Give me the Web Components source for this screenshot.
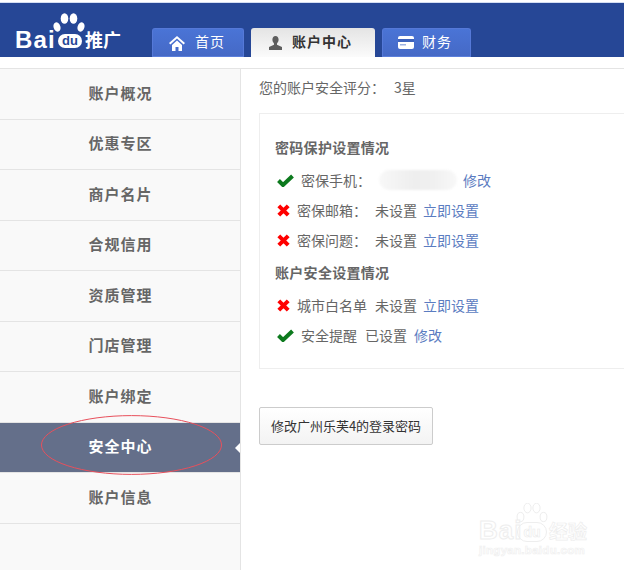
<!DOCTYPE html>
<html lang="zh"><head><meta charset="utf-8">
<style>
html,body{margin:0;padding:0;background:#fff;overflow:hidden}
body{width:624px;height:570px;font-family:"Noto Sans CJK SC","Liberation Sans",sans-serif;color:#666}
</style></head><body>
<bd-app></bd-app>
<script>
const FONT='"Noto Sans CJK SC","Liberation Sans",sans-serif';
const paw=(c)=>`<svg width="32" height="22" viewBox="0 0 32 22" style="display:block"><g fill="${c}"><ellipse cx="4" cy="14" rx="3.4" ry="4.8" transform="rotate(-18 4 14)"/><ellipse cx="11.500" cy="5.500" rx="3.800" ry="5.300"/><ellipse cx="20.500" cy="5.500" rx="3.800" ry="5.300"/><ellipse cx="28" cy="14" rx="3.400" ry="4.800" transform="rotate(18 28 14)"/></g></svg>`;
function def(name,html){customElements.define(name,class extends HTMLElement{connectedCallback(){if(this.shadowRoot)return;const s=this.attachShadow({mode:'open'});s.innerHTML=typeof html==='function'?html(this):html;}});}

def('bd-logo',`<style>
:host{display:block;position:relative;width:108px;height:36px;color:#fff;font-family:"Liberation Sans",sans-serif}
.row{position:absolute;left:0;bottom:0;display:flex;align-items:flex-end}
.bai{font:bold 24px/21px "Liberation Sans",sans-serif;letter-spacing:1.200px;width:43px}
.du{width:24px;height:14px;border-radius:7px;background:#fff;color:#264796;font:bold 13px/13px "Liberation Sans",sans-serif;text-align:center;margin-bottom:2px}
.cn{font:bold 18px/21px ${FONT};margin-left:3px;width:38px;white-space:nowrap}
.paw{position:absolute;left:38px;top:-1px}
</style><div class="paw">${paw('#fff')}</div>
<div class="row"><span class="bai">Bai</span><span class="du">du</span><span class="cn">推广</span></div>`);

def('bd-tab',h=>`<style>
:host{display:flex;align-items:center;box-sizing:border-box;height:29px;width:${h.getAttribute('w')}px;padding-left:${h.getAttribute('pl')}px;padding-bottom:4px;gap:${h.getAttribute('gap')}px;border-radius:3px 3px 0 0;
 background:linear-gradient(#4a74d6,#4569c6);border:1px solid #5579d8;border-bottom-color:#5b7fdb;color:#fff;font:14px/20px ${FONT};letter-spacing:1px}
:host([active]){background:linear-gradient(#e4e4e4,#fbfbfb);border:0;color:#333;font-weight:bold}
svg{display:block;flex:none}
::slotted(svg){margin-top:4px}
</style><slot name="icon"></slot><slot></slot>`);

def('bd-header',`<style>
:host{display:block;border-top:2px solid #fff;box-shadow:inset 0 1px 0 #d4def2;height:54px;padding-top:1px;background:#264796;position:relative}
.in{display:flex;align-items:flex-end;height:54px;padding-left:15px}
bd-logo{margin-bottom:7px;margin-right:29px}
.tabs{display:flex;gap:7px}
</style><div class="in"><bd-logo></bd-logo><div class="tabs"><slot></slot></div></div>`);

def('bd-side-item',`<style>
:host{display:flex;align-items:center;justify-content:center;box-sizing:border-box;height:50.5px;padding:0 0 2px 1px;border-bottom:1px solid #e4e4e4;font:bold 15px/20px ${FONT};letter-spacing:1px;color:#666;position:relative;width:240px}
:host([active]){background:#646f8a;color:#fff;border-bottom-color:#e4e4e4}
:host([active])::after{content:"";position:absolute;right:0;top:20px;border:5px solid transparent;border-right-color:#fff;border-left:0}
</style><slot></slot>`);

def('bd-sidebar',`<style>
:host{display:block;width:240px;background:#f9f9f9;border-right:1px solid #e4e4e4;position:relative;height:501px}
svg{position:absolute;left:40px;top:346px;pointer-events:none}
</style><slot></slot>
<svg width="183" height="61" viewBox="0 0 183 61"><ellipse cx="91.5" cy="30" rx="90" ry="29.4" fill="none" stroke="#e8505c" stroke-width="1"/></svg>`);

def('bd-status',h=>{const ok=h.hasAttribute('ok');return `<style>
:host{display:flex;align-items:center;height:20px;gap:8px;font:14px/20px ${FONT};color:#666;white-space:nowrap}
.ic{flex:none;display:block;margin:0 -1px 0 2px}
</style>${ok?`<svg class="ic" width="17" height="13" viewBox="0 0 17 13"><path d="M1.500 6.500 6 11 15.500 2" fill="none" stroke="#0d7a1e" stroke-width="4"/></svg>`:`<svg class="ic" width="13" height="13" viewBox="0 0 13 13"><path d="M1.800 1.800 11.200 11.200M11.200 1.800 1.800 11.200" fill="none" stroke="#f00" stroke-width="4"/></svg>`}<slot></slot>`});

def('bd-link',`<style>:host{display:inline;color:#5b7cc1;font:14px/20px ${FONT}}</style><slot></slot>`);

def('bd-panel',`<style>
:host{display:block;box-sizing:border-box;width:400px;height:256px;border:1px solid #eee;padding:23px 0 0 15px}
</style><slot></slot>`);

def('bd-heading',`<style>:host{display:block;font:bold 14px/20px ${FONT};letter-spacing:.3px;color:#666}</style><slot></slot>`);

def('bd-button',`<style>
:host{display:flex;align-items:center;justify-content:center;box-sizing:border-box;width:174px;height:38px;border:1px solid #ccc;border-radius:2px;background:linear-gradient(#fff,#f3f3f3);color:#333;font:13px/20px ${FONT};white-space:nowrap}
</style><slot></slot>`);

def('bd-watermark',`<style>
:host{position:absolute;left:479px;top:503px;width:112px;height:54px;color:#fff;pointer-events:none;-webkit-text-stroke:1px #eeeeee}
.bai{position:absolute;left:0;top:13px;font:bold 26px/28px "Liberation Sans",sans-serif;letter-spacing:1px}
.du{position:absolute;left:38px;top:19px;width:30px;height:20px;border-radius:10px;border:1px solid #eee;box-sizing:border-box;font:bold 14px/18px "Liberation Sans",sans-serif;text-align:center;-webkit-text-stroke:.6px #ebebeb}
.cn{position:absolute;left:70px;top:17px;font:bold 19px/22px ${FONT};-webkit-text-stroke:.7px #ededed}
.url{position:absolute;left:0;top:40px;font:bold 11.5px/14px "Liberation Sans",sans-serif;letter-spacing:.3px;-webkit-text-stroke:.7px #f0f0f0}
.paw{position:absolute;left:36px;top:0}
</style><div class="paw"><svg width="34" height="22" viewBox="0 0 32 22"><g fill="#fff" stroke="#eee"><ellipse cx="4.500" cy="14" rx="3.400" ry="4.600"/><ellipse cx="11.500" cy="5" rx="3.600" ry="4.800"/><ellipse cx="20.500" cy="5" rx="3.600" ry="4.800"/><ellipse cx="27.500" cy="14" rx="3.400" ry="4.600"/></g></svg></div>
<span class="bai">Bai</span><span class="du">du</span><span class="cn">经验</span><span class="url">jingyan.baidu.com</span>`);

def('bd-app',`<style>
:host{display:block;position:relative;width:624px;height:570px;overflow:hidden}
.main{display:flex;margin-top:11px;border-top:1px solid #e4e4e4}
.content{flex:1;padding-left:18px;min-width:0;overflow:hidden}
.score{display:flex;gap:9px;font:14px/20px ${FONT};color:#666;margin-top:8px;margin-bottom:16px;white-space:nowrap}
.blob{display:block;width:78px;height:20px;border-radius:10px;background:linear-gradient(90deg,#f8f8f8,#eeeeee 45%,#f0f0f0 70%,#f8f8f8);filter:blur(.8px);margin-right:-2px}
bd-status.first{margin-top:13px}
bd-status.n{margin-top:10px}
bd-heading.h2{margin-top:12px}
bd-button{margin-top:38px}
bd-link.a{margin-left:-2px}
bd-link.b{margin-left:-1px}
svg{display:block}
</style>
<bd-header>
 <bd-tab w="92" pl="16" gap="10"><svg slot="icon" width="16" height="16" viewBox="0 0 16 16"><path d="M8 1 0 8l1.400 1.400L8 3.600l6.600 5.800L16 8z" fill="#fff"/><path d="M3 10 8 5.600 13 10v6H9.500v-4h-3v4H3z" fill="#fff"/></svg>首页</bd-tab>
 <bd-tab active w="124" pl="17" gap="9"><svg slot="icon" width="15" height="16" viewBox="0 0 15 16"><path d="M7.500 1C5.600 1 4.400 2.500 4.400 4.600c0 1.600.7 3 1.600 3.800v1.300L1 12v3h13v-3L9 9.700V8.400c.9-.8 1.600-2.200 1.600-3.800C10.600 2.500 9.400 1 7.500 1z" fill="#5e5e5e"/></svg>账户中心</bd-tab>
 <bd-tab w="89" pl="15" gap="8"><svg slot="icon" width="16" height="13" viewBox="0 0 16 13"><rect width="16" height="13" rx="2" fill="#fff"/><rect y="3" width="16" height="3" fill="#3e63bd"/><rect x="2" y="8" width="6" height="1.500" fill="#9db2e2"/></svg>财务</bd-tab>
</bd-header>
<div class="main">
 <bd-sidebar>
  <bd-side-item>账户概况</bd-side-item><bd-side-item>优惠专区</bd-side-item><bd-side-item>商户名片</bd-side-item><bd-side-item>合规信用</bd-side-item><bd-side-item>资质管理</bd-side-item><bd-side-item>门店管理</bd-side-item><bd-side-item>账户绑定</bd-side-item><bd-side-item active>安全中心</bd-side-item><bd-side-item>账户信息</bd-side-item>
 </bd-sidebar>
 <div class="content">
  <div class="score"><span>您的账户安全评分：</span><span>3星</span></div>
  <bd-panel>
   <bd-heading>密码保护设置情况</bd-heading>
   <bd-status ok class="first"><span>密保手机：</span><span class="blob"></span><bd-link>修改</bd-link></bd-status>
   <bd-status class="n"><span>密保邮箱：</span><span>未设置</span><bd-link class="a">立即设置</bd-link></bd-status>
   <bd-status class="n"><span>密保问题：</span><span>未设置</span><bd-link class="a">立即设置</bd-link></bd-status>
   <bd-heading class="h2">账户安全设置情况</bd-heading>
   <bd-status class="first"><span>城市白名单</span><span>未设置</span><bd-link class="a">立即设置</bd-link></bd-status>
   <bd-status ok class="n"><span>安全提醒</span><span>已设置</span><bd-link class="b">修改</bd-link></bd-status>
  </bd-panel>
  <bd-button>修改广州乐芙4的登录密码</bd-button>
 </div>
</div>
<bd-watermark></bd-watermark>`);
</script>
</body></html>
